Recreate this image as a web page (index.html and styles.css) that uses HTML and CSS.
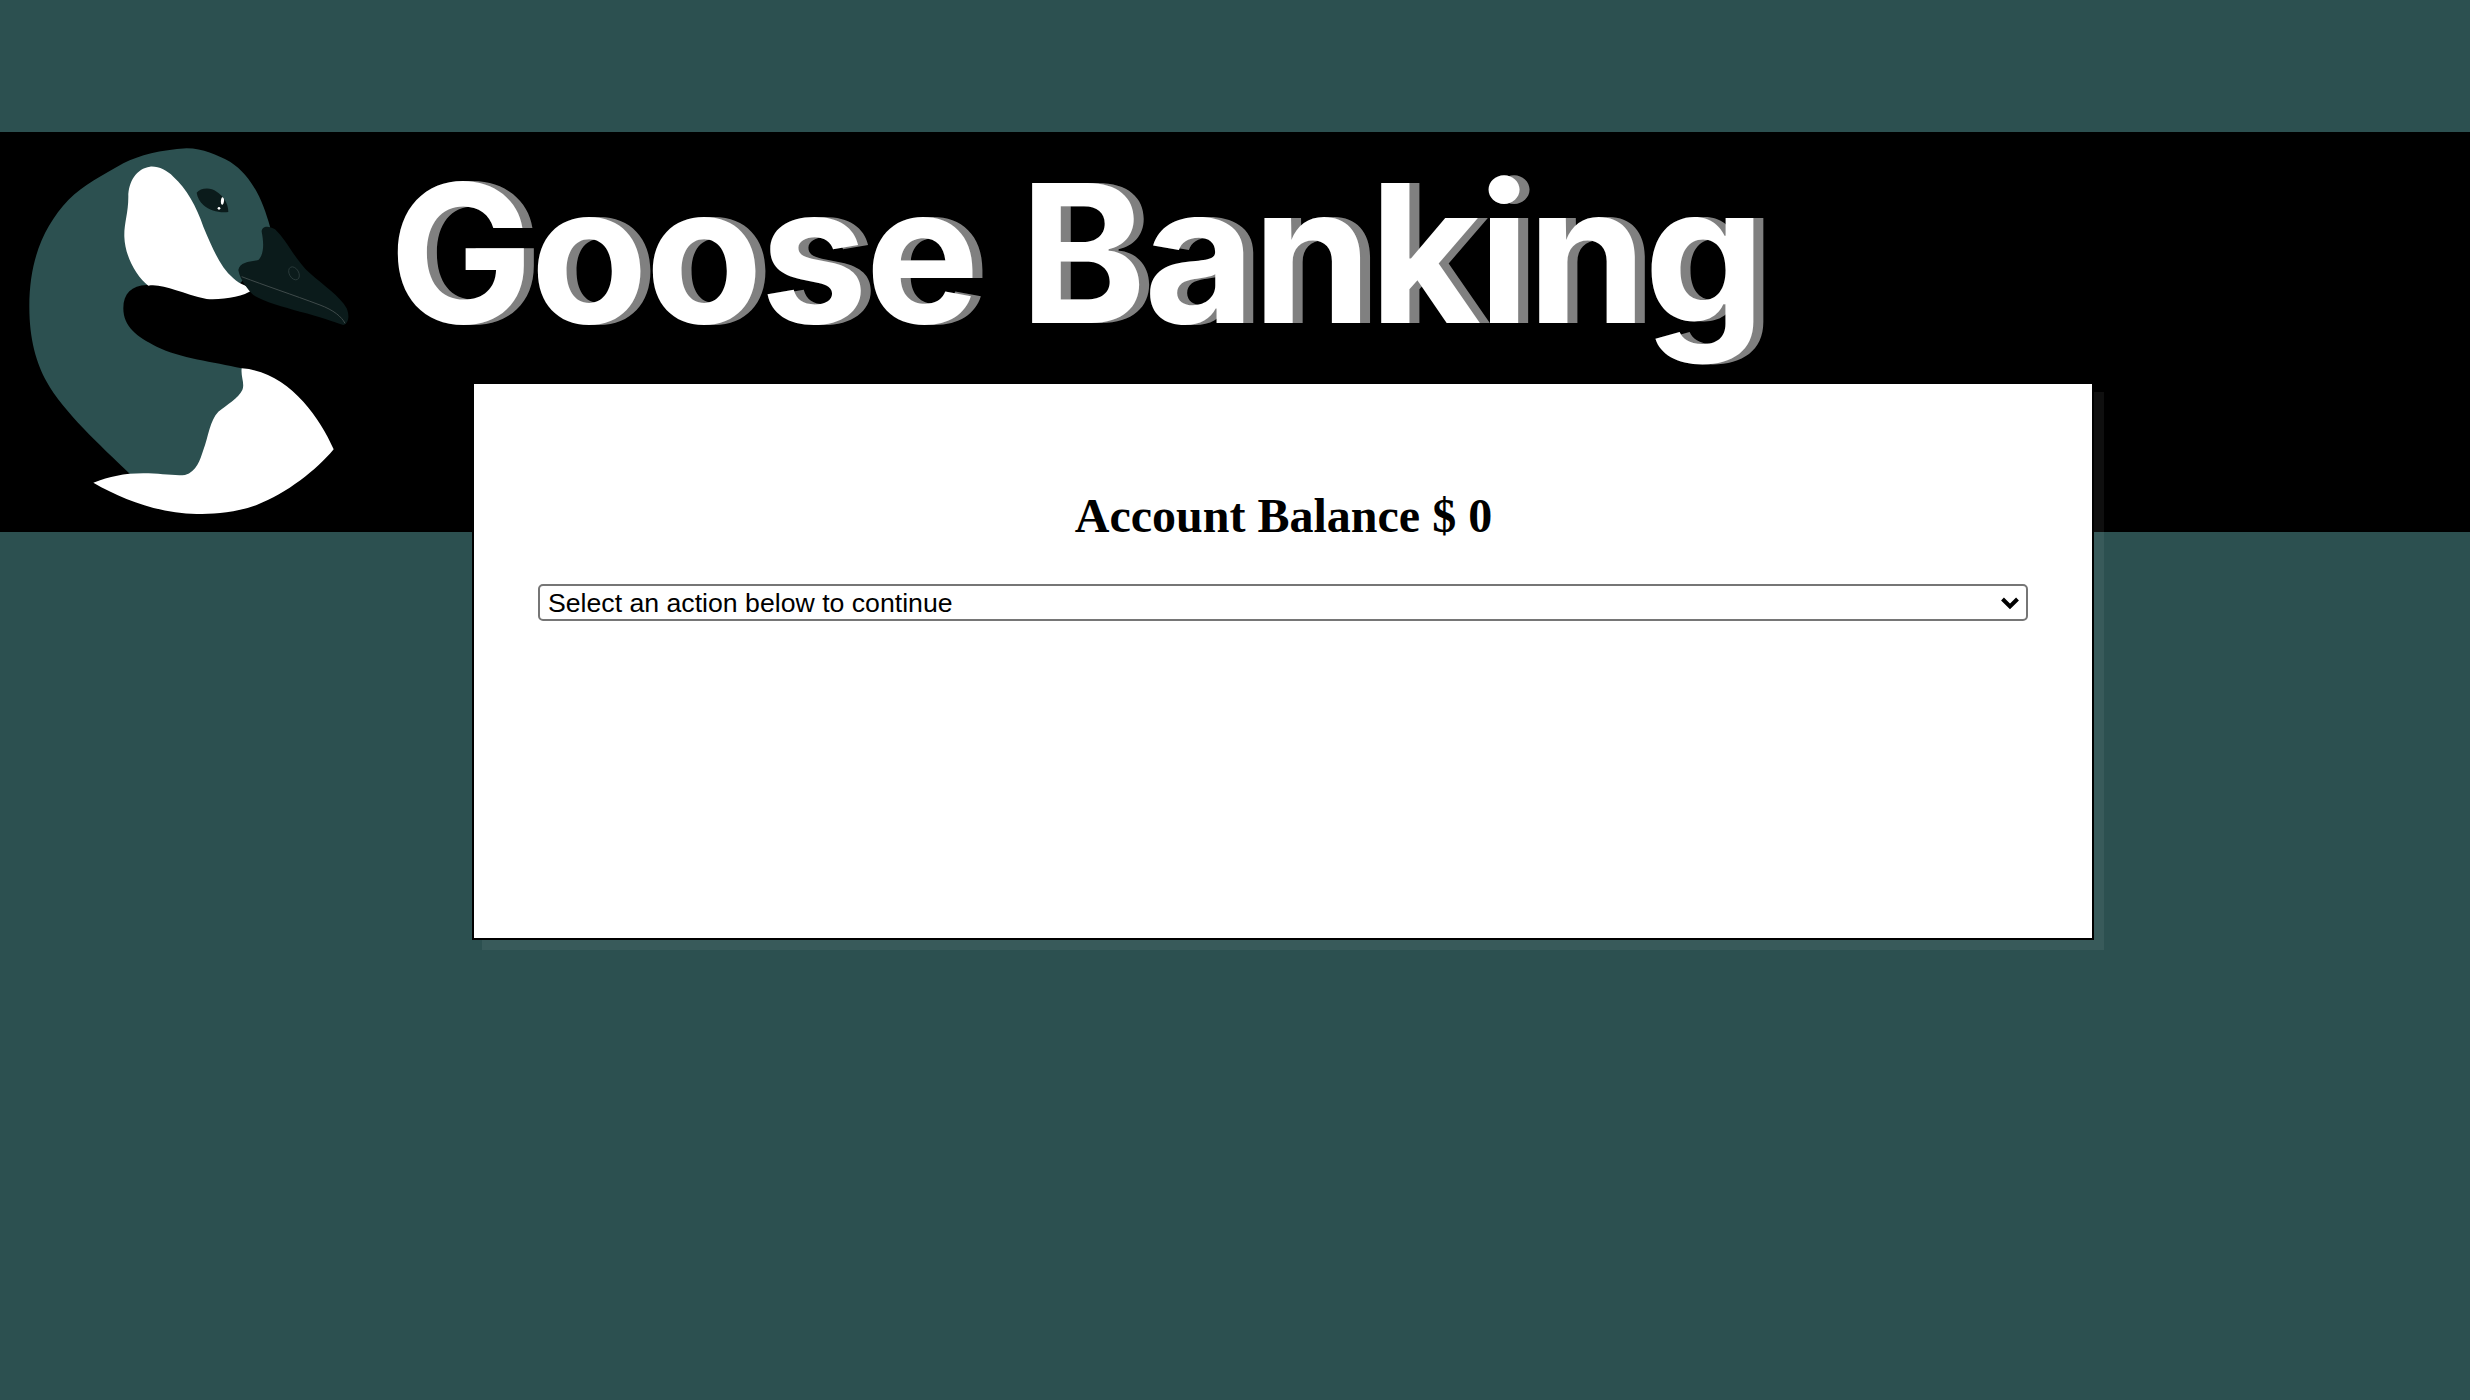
FILE: index.html
```html
<!DOCTYPE html>
<html lang="en">
<head>
<meta charset="utf-8">
<title>Goose Banking</title>
<link rel="stylesheet" href="styles.css">
</head>
<body>
<header class="banner">
  <svg class="logo" viewBox="0 36 1200 1200" aria-hidden="true">
    <path class="logo-teal" d="M810 320 C790 250 760 170 690 125 C650 105 610 85 560 85 C480 90 420 105 370 130 C310 165 250 195 205 240 C130 320 88 420 88 560 C88 660 110 730 140 785 C190 875 300 975 390 1062 L600 1080 L760 800 L725 745 C640 725 540 715 470 680 C410 650 370 620 370 565 C370 520 395 497 440 495 L720 490 L790 420 Z"/>
    <path class="logo-white" d="M450 140 C410 145 385 185 385 230 C385 280 372 310 373 350 C375 410 410 470 445 497 C490 490 540 520 620 537 C670 540 730 530 757 510 C750 500 720 495 700 475 C660 440 640 390 610 320 C590 260 560 205 520 170 C500 150 475 138 450 140 Z"/>
    <path class="logo-white" d="M725 745 C800 750 860 790 910 845 C950 890 980 940 1001 988 C950 1050 860 1120 770 1155 C700 1180 640 1182 590 1182 C480 1180 370 1140 280 1088 C330 1070 370 1060 430 1060 C480 1060 520 1068 555 1065 C590 1055 600 1020 610 990 C625 950 630 900 655 875 C680 855 715 835 727 810 C735 790 722 770 725 745 Z"/>
    <path class="logo-dark" d="M785 335 C785 318 805 315 825 328 C860 360 885 420 930 460 C970 495 1020 530 1040 565 C1050 590 1045 610 1030 615 C1000 605 960 590 900 575 C850 560 790 545 760 525 C745 510 720 480 715 450 C720 425 750 425 775 420 C795 400 790 360 785 335 Z"/>
    <path class="logo-bill" d="M725 470 C790 495 880 525 960 555 C1000 570 1025 590 1035 610"/>
    <ellipse class="logo-nostril" cx="882" cy="460" rx="14" ry="21" transform="rotate(-30 882 460)"/>
    <path class="logo-dark" d="M590 218 C600 205 630 200 650 215 C670 228 685 250 685 276 C660 280 630 272 610 255 C600 245 592 232 590 218 Z"/>
    <path class="logo-white" d="M666 232 C672 232 674 240 671 248 C669 256 664 256 663 250 C662 243 663 236 666 232 Z"/>
    <circle class="logo-white" cx="657" cy="265" r="4"/>
  </svg>
  <h1 class="brand">Goose Banking</h1>
</header>
<main class="panel">
  <h2 class="balance">Account Balance $ 0</h2>
  <select class="action">
    <option>Select an action below to continue</option>
  </select>
</main>
</body>
</html>
```

FILE: styles.css
```css
html, body {
  margin: 0;
  min-height: 100%;
  background: #2c5050;
}
body {
  height: 1400px;
  overflow: hidden;
  padding-top: 132px;
  box-sizing: border-box;
}
.banner {
  display: flex;
  align-items: flex-start;
  height: 400px;
  background: #000;
}
.logo {
  flex: none;
  width: 400px;
  height: 400px;
}
.logo-teal { fill: #2c5050; }
.logo-white { fill: #fff; }
.logo-dark { fill: #0b1b1b; }
.logo-bill { fill: none; stroke: #3f4a4a; stroke-width: 3; }
.logo-nostril { fill: none; stroke: #2c3c3c; stroke-width: 2.5; }
.brand {
  margin: 0 0 0 -11px;
  padding-top: 25px;
  color: #fff;
  font: 700 192px/1 Inter, "Liberation Sans", sans-serif;
  letter-spacing: -2.75px;
  text-shadow: 10px 0 0 #808080;
}
.panel {
  position: relative;
  box-sizing: border-box;
  width: 1622px;
  height: 558px;
  margin: -150px 0 0 472px;
  padding: 64px;
  background: #fff;
  border: 2px solid #000;
  box-shadow: 10px 10px 0 rgba(255, 255, 255, 0.06);
}
.balance {
  margin: 40px 0 41px;
  padding-left: 1px;
  text-align: center;
  color: #000;
  font: 700 48px/1.15 "Liberation Serif", serif;
}
.action {
  display: block;
  box-sizing: border-box;
  width: 100%;
  height: 37px;
  padding: 0 8px;
  font: 26.67px "Liberation Sans", Arial, sans-serif;
  color: #000;
  appearance: none;
  background: #fff url("data:image/svg+xml,%3Csvg xmlns='http://www.w3.org/2000/svg' width='20' height='14'%3E%3Cpath d='M2.5 3l7.5 7.5 7.5-7.5' fill='none' stroke='%23000' stroke-width='4'/%3E%3C/svg%3E") no-repeat right 6px center;
  border: 2px solid #767676;
  border-radius: 5px;
}
```
